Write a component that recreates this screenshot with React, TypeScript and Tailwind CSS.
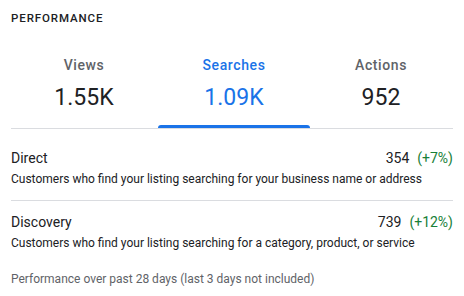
import React from "react";

const tabs = [
  { label: "Views", value: "1.55K", active: false },
  { label: "Searches", value: "1.09K", active: true },
  { label: "Actions", value: "952", active: false },
];

const rows = [
  {
    title: "Direct",
    value: "354",
    change: "(+7%)",
    desc: "Customers who find your listing searching for your business name or address",
  },
  {
    title: "Discovery",
    value: "739",
    change: "(+12%)",
    desc: "Customers who find your listing searching for a category, product, or service",
  },
];

export default function App() {
  return (
    <div className="w-[464px] h-[296px] bg-white px-[11px] font-['Roboto',sans-serif] text-[#202124]">
      <h2 className="pt-[11px] text-[11.5px] font-medium tracking-[0.9px] leading-[14px]">PERFORMANCE</h2>

      {/* tabs */}
      <div className="mt-[32px] border-b border-[#dadce0]">
        <div className="-ml-[1px] grid grid-cols-[148px_152px_142px]">
          {tabs.map((t) => (
            <div key={t.label} className="flex flex-col items-center">
              <span
                className={`text-[14px] leading-[16px] tracking-[0.6px] font-medium ${
                  t.active ? "text-[#1a73e8]" : "text-[#5f6368]"
                }`}
              >
                {t.label}
              </span>
              <span
                className={`mt-[11px] text-[23px] leading-[28px] font-normal ${
                  t.active ? "text-[#1a73e8]" : "text-[#202124]"
                }`}
              >
                {t.value}
              </span>
              <div
                className={`mt-[13px] h-[3px] w-full rounded-t-[3px] ${
                  t.active ? "bg-[#1a73e8]" : "bg-transparent"
                }`}
              />
            </div>
          ))}
        </div>
      </div>

      {/* breakdown */}
      <div className="mt-[20px]">
        {rows.map((r, i) => (
          <div
            key={r.title}
            className={i === 0 ? "pb-[13px] border-b border-[#dadce0]" : "pt-[12px]"}
          >
            <div className="flex justify-between items-center text-[14px] leading-[18px]">
              <span>{r.title}</span>
              <span>
                {r.value}
                <span className="ml-[8px] text-[#188038]">{r.change}</span>
              </span>
            </div>
            <p className="mt-[5px] text-[12px] leading-[15px]">{r.desc}</p>
          </div>
        ))}
      </div>

      <p className="mt-[21px] text-[12px] leading-[15px] text-[#5f6368]">
        Performance over past 28 days (last 3 days not included)
      </p>
    </div>
  );
}
